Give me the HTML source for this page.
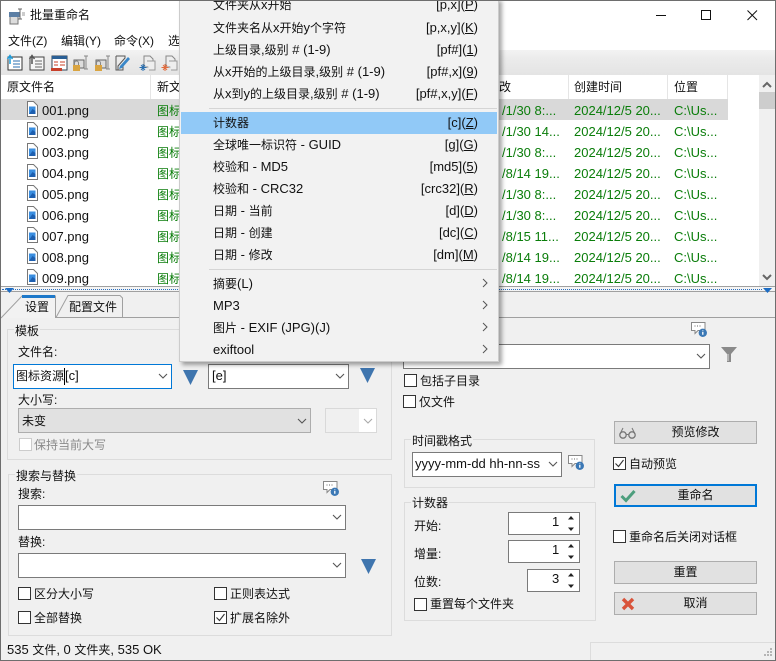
<!DOCTYPE html>
<html lang="zh"><head><meta charset="utf-8"><title>批量重命名</title>
<style>
html,body{margin:0;padding:0}
#w{position:relative;width:776px;height:661px;overflow:hidden;background:#f0f0f0;font:12px/16px "Liberation Sans","Noto Sans CJK SC",sans-serif;color:#111}
#w div,#w svg{position:absolute}
.t{white-space:nowrap}
b{font-weight:normal;font-size:13px}
.r{left:1px;width:758px;height:21px;overflow:hidden}
.r span{position:absolute;top:4px;white-space:nowrap;color:#0a7d0a}
.r span.n{color:#111;left:41px;font-size:13px}
.box{background:#fff;border:1px solid #7a7a7a;box-sizing:border-box}
.btn{background:#e1e1e1;border:1px solid #adadad;box-sizing:border-box;text-align:center;line-height:21px}
.gb{border:1px solid #dcdcdc;box-sizing:border-box}
.cb{width:13px;height:13px;background:#fff;border:1px solid #333;box-sizing:border-box}
.lb{background:#f0f0f0;padding:0 1px}
.mi{left:213px;white-space:nowrap;color:#111}
.ms{right:298px;white-space:nowrap;color:#111}
.hd{top:79px;white-space:nowrap}
</style></head><body>
<div id="w">
<svg width="0" height="0" style="position:absolute"><defs>
<symbol id="f" viewBox="0 0 11 16"><path d="M.5.5h6l4 4v11H.5z" fill="#fff" stroke="#777"/><rect x="2" y="5.500" width="6.500" height="7.500" fill="#3a8ee0"/><path d="M2 13l3.500-5 3 2v3z" fill="#1d5fb0"/></symbol>
<symbol id="c" viewBox="0 0 10 6"><path d="M1 1l4 4 4-4" fill="none" stroke="#555" stroke-width="1.100"/></symbol>
<symbol id="ii" viewBox="0 0 16 16"><path d="M.5 1.500h13.500v8H7l-3 3v-3H.5z" fill="#fff" stroke="#888"/><path d="M3.500 5h1M6 5h1M8.500 5h1" stroke="#666"/><circle cx="11.800" cy="11.800" r="4.200" fill="#3b78b5"/><path d="M11.800 9.500v.8M11.800 11v2.800" stroke="#fff" stroke-width="1.300"/></symbol>
<symbol id="tr" viewBox="0 0 15 15"><path d="M0 0h15L7.500 15z" fill="#3f75ae"/></symbol>
<symbol id="ck" viewBox="0 0 13 13"><path d="M2.500 6.500l3 3 5-6.500" fill="none" stroke="#333" stroke-width="1.100"/></symbol>
<symbol id="sp" viewBox="0 0 8 17"><path d="M4 1l3 3.500H1zM4 16l3-3.500H1z" fill="#222"/></symbol>
</defs></svg>

<!-- title bar -->
<div style="left:0;top:0;width:776px;height:50px;background:#fff"></div>
<svg style="left:9px;top:8px" width="17" height="17" viewBox="0 0 17 17"><rect x="1" y="8" width="8" height="8" fill="#ddd" stroke="#777"/><rect x="0" y="4" width="11" height="5" fill="#5c7fa5"/><path d="M11 1v10M9 1h4M9 11h4" stroke="#666" fill="none"/><rect x="13" y="4" width="3" height="4" fill="#ccc"/></svg>
<div class="t" style="left:30px;top:7px">批量重命名</div>
<svg style="left:650px;top:8px" width="115" height="16" viewBox="0 0 115 16"><path d="M6 7.500h10" stroke="#111"/><rect x="51.500" y="2.500" width="9" height="9" fill="none" stroke="#111"/><path d="M97.500 2.500l9.500 9.500M107 2.500L97.500 12" stroke="#111" fill="none"/></svg>
<div class="t" style="left:8px;top:33px">文件(Z)</div>
<div class="t" style="left:61px;top:33px">编辑(Y)</div>
<div class="t" style="left:114px;top:33px">命令(X)</div>
<div class="t" style="left:168px;top:33px">选</div>

<!-- toolbar -->
<div style="left:0;top:50px;width:776px;height:25px;background:linear-gradient(#f3f3f3,#ececec 30%,#e4e4e4)"></div>
<svg style="left:6px;top:53px" width="172" height="20" viewBox="0 0 172 20">
<g fill="none"><rect x="2" y="4" width="14" height="13" fill="#fff" stroke="#333"/><path d="M7 8h7M7 11h7M7 14h7" stroke="#2a6fb0"/><path d="M4 11V3M1.500 6L4 2.500 6.500 6" stroke="#1f9ad6" stroke-width="1.500"/>
<rect x="24" y="4" width="14" height="13" fill="#f5f5f5" stroke="#444"/><path d="M29 8h7M29 11h7M29 14h7" stroke="#666"/><path d="M26 11V3M23.500 6L26 2.500 28.500 6" stroke="#555" stroke-width="1.500"/>
<rect x="46" y="3" width="15" height="14" fill="#fff" stroke="#345"/><rect x="46" y="3" width="15" height="3" fill="#2a5f95"/><path d="M48 9h4M54 9h5M48 12h4M54 12h5" stroke="#c8402a"/><rect x="45" y="15" width="11" height="3" fill="#c8402a"/>
<rect x="68" y="7" width="10" height="8" fill="#ddd" stroke="#666"/><path d="M80 3v13M78 3h4M78 16h4" stroke="#888"/><rect x="67" y="12" width="7" height="6" fill="#d9a441"/><path d="M68.500 12V10a2 2 0 0 1 4 0v2" stroke="#888"/>
<rect x="90" y="7" width="10" height="8" fill="#ddd" stroke="#666"/><path d="M102 3v13M100 3h4M100 16h4" stroke="#888"/><rect x="89" y="12" width="7" height="6" fill="#d9a441"/><path d="M90.500 12V10a2 2 0 0 1 4 0v2" stroke="#888"/>
<path d="M110 3h9v2l-7 8v4h5v-4M110 3v14h7" stroke="#555"/><path d="M114 13l8-9 2 2-8 9-3 1z" fill="#3a87c8"/>
<path d="M138 3h6l3 3v8h-9z" fill="#eee" stroke="#888"/><path d="M141 8h8v9h-6" fill="#eee" stroke="#999"/><path d="M137 11v7M133.500 14.500h7M135 12l4 5M139 12l-4 5" stroke="#2a6fb0"/>
<path d="M160 3h6l3 3v8h-9z" fill="#eee" stroke="#888"/><path d="M163 8h8v9h-6" fill="#eee" stroke="#999"/><path d="M159 11v7M155.500 14.500h7M157 12l4 5M161 12l-4 5" stroke="#e26a3c"/></g>
</svg>

<!-- list -->
<div style="left:1px;top:75px;width:758px;height:212px;background:#fff"></div>
<div style="left:759px;top:75px;width:16px;height:212px;background:#f0f0f0"></div>
<div style="left:150px;top:75px;width:1px;height:24px;background:#e5e5e5"></div>
<div style="left:568px;top:75px;width:1px;height:24px;background:#e5e5e5"></div>
<div style="left:667px;top:75px;width:1px;height:24px;background:#e5e5e5"></div>
<div style="left:727px;top:75px;width:1px;height:24px;background:#e5e5e5"></div>
<div class="hd" style="left:7px">原文件名</div>
<div class="hd" style="left:157px">新文件名</div>
<div class="hd" style="left:499px">改</div>
<div class="hd" style="left:574px">创建时间</div>
<div class="hd" style="left:674px">位置</div>
<div style="left:759px;top:92px;width:16px;height:17px;background:#cdcdcd"></div>
<svg style="left:760px;top:80px" width="14" height="9" viewBox="0 0 14 9"><path d="M3 7l4-4 4 4" fill="none" stroke="#666" stroke-width="2"/></svg>
<svg style="left:760px;top:273px" width="14" height="9" viewBox="0 0 14 9"><path d="M3 2l4 4 4-4" fill="none" stroke="#666" stroke-width="2"/></svg>

<div class="r" style="top:99px;width:727px;background:#d9d9d9"><span class="n">001.png</span><span style="left:156px">图标资源001.png</span><span style="left:501px;font-size:13px">/1/30 8:...</span><span style="left:573px;font-size:13px">2024/12/5 20...</span><span style="left:673px;font-size:13px">C:\Us...</span></div>
<div class="r" style="top:120px"><span class="n">002.png</span><span style="left:156px">图标资源002.png</span><span style="left:501px;font-size:13px">/1/30 14...</span><span style="left:573px;font-size:13px">2024/12/5 20...</span><span style="left:673px;font-size:13px">C:\Us...</span></div>
<div class="r" style="top:141px"><span class="n">003.png</span><span style="left:156px">图标资源003.png</span><span style="left:501px;font-size:13px">/1/30 8:...</span><span style="left:573px;font-size:13px">2024/12/5 20...</span><span style="left:673px;font-size:13px">C:\Us...</span></div>
<div class="r" style="top:162px"><span class="n">004.png</span><span style="left:156px">图标资源004.png</span><span style="left:501px;font-size:13px">/8/14 19...</span><span style="left:573px;font-size:13px">2024/12/5 20...</span><span style="left:673px;font-size:13px">C:\Us...</span></div>
<div class="r" style="top:183px"><span class="n">005.png</span><span style="left:156px">图标资源005.png</span><span style="left:501px;font-size:13px">/1/30 8:...</span><span style="left:573px;font-size:13px">2024/12/5 20...</span><span style="left:673px;font-size:13px">C:\Us...</span></div>
<div class="r" style="top:204px"><span class="n">006.png</span><span style="left:156px">图标资源006.png</span><span style="left:501px;font-size:13px">/1/30 8:...</span><span style="left:573px;font-size:13px">2024/12/5 20...</span><span style="left:673px;font-size:13px">C:\Us...</span></div>
<div class="r" style="top:225px"><span class="n">007.png</span><span style="left:156px">图标资源007.png</span><span style="left:501px;font-size:13px">/8/15 11...</span><span style="left:573px;font-size:13px">2024/12/5 20...</span><span style="left:673px;font-size:13px">C:\Us...</span></div>
<div class="r" style="top:246px"><span class="n">008.png</span><span style="left:156px">图标资源008.png</span><span style="left:501px;font-size:13px">/8/14 19...</span><span style="left:573px;font-size:13px">2024/12/5 20...</span><span style="left:673px;font-size:13px">C:\Us...</span></div>
<div class="r" style="top:267px;height:20px"><span class="n">009.png</span><span style="left:156px">图标资源009.png</span><span style="left:501px;font-size:13px">/8/14 19...</span><span style="left:573px;font-size:13px">2024/12/5 20...</span><span style="left:673px;font-size:13px">C:\Us...</span></div>
<svg style="left:27px;top:101px" width="11" height="16"><use href="#f"/></svg>
<svg style="left:27px;top:122px" width="11" height="16"><use href="#f"/></svg>
<svg style="left:27px;top:143px" width="11" height="16"><use href="#f"/></svg>
<svg style="left:27px;top:164px" width="11" height="16"><use href="#f"/></svg>
<svg style="left:27px;top:185px" width="11" height="16"><use href="#f"/></svg>
<svg style="left:27px;top:206px" width="11" height="16"><use href="#f"/></svg>
<svg style="left:27px;top:227px" width="11" height="16"><use href="#f"/></svg>
<svg style="left:27px;top:248px" width="11" height="16"><use href="#f"/></svg>
<svg style="left:27px;top:269px" width="11" height="16"><use href="#f"/></svg>

<!-- splitter -->
<div style="left:1px;top:286px;width:774px;height:6px;box-sizing:border-box;border-top:1px solid #a0a0a0;border-bottom:1px solid #a0a0a0;background:#f4f4f4"></div>
<div style="left:2px;top:289px;width:760px;height:0;border-top:1px dotted #2a6fc0"></div>
<svg style="left:5px;top:288px" width="9" height="5"><path d="M0 0h9L4.500 5z" fill="#1c6cc4"/></svg>
<svg style="left:763px;top:288px" width="9" height="5"><path d="M0 0h9L4.500 5z" fill="#1c6cc4"/></svg>

<!-- tabs -->
<div style="left:123px;top:317px;width:652px;height:1px;background:#a0a0a0"></div>
<svg style="left:0;top:292px" width="126" height="27" viewBox="0 0 126 27"><path d="M56 25.500L68 3.500h52l2.500 2.500v19.500z" fill="#f0f0f0" stroke="#a0a0a0"/><path d="M1 26L22 4h33.500v22" fill="#f2f2f2" stroke="#a0a0a0"/><rect x="22" y="3" width="33" height="3" fill="#1f79c9"/></svg>
<div class="t" style="left:25px;top:299px">设置</div>
<div class="t" style="left:69px;top:299px">配置文件</div>

<!-- 模板 -->
<div class="gb" style="left:7px;top:329px;width:385px;height:131px"></div>
<div class="t lb" style="left:14px;top:323px">模板</div>
<div class="t" style="left:18px;top:344px">文件名:</div>
<div class="box" style="left:13px;top:364px;width:159px;height:25px;border-color:#0078d7"></div>
<div class="t" style="left:16px;top:368px">图标资源<b style="margin-left:1px">[c]</b></div>
<div style="left:64px;top:368px;width:1px;height:17px;background:#000"></div>
<svg style="left:158px;top:373px" width="10" height="6"><use href="#c"/></svg>
<svg style="left:183px;top:370px" width="15" height="15"><use href="#tr"/></svg>
<div class="box" style="left:208px;top:364px;width:141px;height:25px"></div>
<div class="t" style="left:212px;top:368px"><b>[e]</b></div>
<svg style="left:335px;top:373px" width="10" height="6"><use href="#c"/></svg>
<svg style="left:360px;top:368px" width="15" height="15"><use href="#tr"/></svg>
<div class="t" style="left:18px;top:392px">大小写:</div>
<div class="btn" style="left:18px;top:408px;width:293px;height:25px"></div>
<div class="t" style="left:22px;top:413px">未变</div>
<svg style="left:297px;top:418px" width="10" height="6"><use href="#c"/></svg>
<div style="left:325px;top:408px;width:52px;height:25px;box-sizing:border-box;border:1px solid #d9d9d9;background:#f0f0f0"></div>
<div style="left:359px;top:409px;width:17px;height:23px;background:#fff"></div>
<svg style="left:363px;top:418px;opacity:.5" width="10" height="6"><use href="#c"/></svg>
<div class="cb" style="left:19px;top:438px;border-color:#ccc"></div>
<div class="t" style="left:34px;top:437px;color:#8a8a8a">保持当前大写</div>

<!-- 搜索与替换 -->
<div class="gb" style="left:8px;top:474px;width:384px;height:162px"></div>
<div class="t lb" style="left:15px;top:468px">搜索与替换</div>
<svg style="left:323px;top:480px" width="16" height="16"><use href="#ii"/></svg>
<div class="t" style="left:18px;top:486px">搜索:</div>
<div class="box" style="left:18px;top:505px;width:328px;height:25px"></div>
<svg style="left:332px;top:514px" width="10" height="6"><use href="#c"/></svg>
<div class="t" style="left:18px;top:534px">替换:</div>
<div class="box" style="left:18px;top:553px;width:328px;height:25px"></div>
<svg style="left:332px;top:562px" width="10" height="6"><use href="#c"/></svg>
<svg style="left:361px;top:559px" width="15" height="15"><use href="#tr"/></svg>
<div class="cb" style="left:18px;top:587px"></div><div class="t" style="left:34px;top:586px">区分大小写</div>
<div class="cb" style="left:214px;top:587px"></div><div class="t" style="left:230px;top:586px">正则表达式</div>
<div class="cb" style="left:18px;top:611px"></div><div class="t" style="left:34px;top:610px">全部替换</div>
<div class="cb" style="left:214px;top:611px"></div><svg style="left:214px;top:611px" width="13" height="13"><use href="#ck"/></svg><div class="t" style="left:230px;top:610px">扩展名除外</div>
<div class="t" style="left:7px;top:642px"><b>535 </b>文件<b>, 0 </b>文件夹<b>, 535 OK</b></div>
<div style="left:591px;top:642px;width:184px;height:1px;background:#dcdcdc"></div>
<div style="left:590px;top:642px;width:1px;height:18px;background:#dcdcdc"></div>
<svg style="left:762px;top:647px" width="12" height="12"><path d="M8 1h2v2H8zM5 4h2v2H5zM8 4h2v2H8zM2 7h2v2H2zM5 7h2v2H5zM8 7h2v2H8z" fill="#b5b5b5"/></svg>

<!-- right side -->
<svg style="left:691px;top:321px" width="16" height="16"><use href="#ii"/></svg>
<div class="box" style="left:403px;top:344px;width:307px;height:25px"></div>
<svg style="left:696px;top:353px" width="10" height="6"><use href="#c"/></svg>
<svg style="left:721px;top:346px" width="16" height="18" viewBox="0 0 16 18"><path d="M0 1h16l-6 7v8H6V8z" fill="#8a8a8a"/><path d="M7 8v7" stroke="#ddd"/></svg>
<div class="cb" style="left:404px;top:374px"></div><div class="t" style="left:420px;top:373px">包括子目录</div>
<div class="cb" style="left:403px;top:395px"></div><div class="t" style="left:419px;top:394px">仅文件</div>
<div class="gb" style="left:404px;top:439px;width:191px;height:49px"></div>
<div class="t lb" style="left:411px;top:433px">时间戳格式</div>
<div class="box" style="left:412px;top:452px;width:150px;height:25px"></div>
<div class="t" style="left:415px;top:456px"><b>yyyy-mm-dd hh-nn-ss</b></div>
<svg style="left:548px;top:461px" width="10" height="6"><use href="#c"/></svg>
<svg style="left:568px;top:454px" width="16" height="16"><use href="#ii"/></svg>
<div class="gb" style="left:404px;top:502px;width:192px;height:119px"></div>
<div class="t lb" style="left:411px;top:495px">计数器</div>
<div class="t" style="left:414px;top:518px">开始:</div>
<div class="box" style="left:508px;top:512px;width:72px;height:23px"></div>
<div class="t" style="left:552px;top:514px"><b>1</b></div>
<svg style="left:567px;top:515px" width="8" height="17"><use href="#sp"/></svg>
<div class="t" style="left:414px;top:546px">增量:</div>
<div class="box" style="left:508px;top:540px;width:72px;height:23px"></div>
<div class="t" style="left:552px;top:542px"><b>1</b></div>
<svg style="left:567px;top:543px" width="8" height="17"><use href="#sp"/></svg>
<div class="t" style="left:414px;top:574px">位数:</div>
<div class="box" style="left:527px;top:569px;width:53px;height:23px"></div>
<div class="t" style="left:552px;top:571px"><b>3</b></div>
<svg style="left:567px;top:572px" width="8" height="17"><use href="#sp"/></svg>
<div class="cb" style="left:414px;top:598px"></div><div class="t" style="left:430px;top:596px">重置每个文件夹</div>

<div class="btn" style="left:614px;top:421px;width:143px;height:23px">&nbsp;&nbsp;&nbsp;&nbsp;&nbsp;&nbsp;预览修改</div>
<svg style="left:619px;top:426px" width="17" height="14" viewBox="0 0 17 14"><circle cx="4" cy="9" r="3.200" fill="none" stroke="#777" stroke-width="1.300"/><circle cx="13" cy="9" r="3.200" fill="none" stroke="#777" stroke-width="1.300"/><path d="M7 8.500h3M1 8l3-6M16 8l-3-6" fill="none" stroke="#777"/></svg>
<div class="cb" style="left:613px;top:457px"></div><svg style="left:613px;top:457px" width="13" height="13"><use href="#ck"/></svg><div class="t" style="left:629px;top:456px">自动预览</div>
<div class="btn" style="left:614px;top:484px;width:143px;height:23px;border:2px solid #0078d7;line-height:19px">&nbsp;&nbsp;&nbsp;&nbsp;&nbsp;&nbsp;重命名</div>
<svg style="left:620px;top:489px" width="16" height="14" viewBox="0 0 16 14"><path d="M1.500 7l4.500 4.500L14.500 2" fill="none" stroke="#4d9e7d" stroke-width="3"/></svg>
<div class="cb" style="left:613px;top:530px"></div><div class="t" style="left:629px;top:529px">重命名后关闭对话框</div>
<div class="btn" style="left:614px;top:561px;width:143px;height:23px;padding-right:0">重置</div>
<div class="btn" style="left:614px;top:592px;width:143px;height:23px">&nbsp;&nbsp;&nbsp;&nbsp;&nbsp;&nbsp;取消</div>
<svg style="left:621px;top:597px" width="14" height="14" viewBox="0 0 14 14"><path d="M2 2l10 10M12 2L2 12" stroke="#d9533a" stroke-width="3.400"/></svg>

<!-- popup menu -->
<div style="left:179px;top:-2px;width:320px;height:364px;background:#f2f2f2;border-left:1px solid #ccc;border-right:1px solid #ccc;border-bottom:1px solid #ccc;box-sizing:border-box;box-shadow:3px 3px 4px rgba(0,0,0,.35)"></div>
<div style="left:209px;top:108px;width:288px;height:1px;background:#d5d5d5"></div>
<div style="left:209px;top:269px;width:288px;height:1px;background:#d5d5d5"></div>
<div style="left:181px;top:112px;width:316px;height:22px;background:#91c9f7"></div>
<div class="t mi" style="top:-3px">文件夹从<b>x</b>开始</div><div class="t ms" style="top:-3px"><b>[p,x](<u>P</u>)</b></div>
<div class="t mi" style="top:20px">文件夹名从<b>x</b>开始<b>y</b>个字符</div><div class="t ms" style="top:20px"><b>[p,x,y](<u>K</u>)</b></div>
<div class="t mi" style="top:42px">上级目录<b>,</b>级别<b> # (1-9)</b></div><div class="t ms" style="top:42px"><b>[pf#](<u>1</u>)</b></div>
<div class="t mi" style="top:64px">从<b>x</b>开始的上级目录<b>,</b>级别<b> # (1-9)</b></div><div class="t ms" style="top:64px"><b>[pf#,x](<u>9</u>)</b></div>
<div class="t mi" style="top:86px">从<b>x</b>到<b>y</b>的上级目录<b>,</b>级别<b> # (1-9)</b></div><div class="t ms" style="top:86px"><b>[pf#,x,y](<u>F</u>)</b></div>
<div class="t mi" style="top:115px">计数器</div><div class="t ms" style="top:115px"><b>[c](<u>Z</u>)</b></div>
<div class="t mi" style="top:137px">全球唯一标识符<b> - GUID</b></div><div class="t ms" style="top:137px"><b>[g](<u>G</u>)</b></div>
<div class="t mi" style="top:159px">校验和<b> - MD5</b></div><div class="t ms" style="top:159px"><b>[md5](<u>5</u>)</b></div>
<div class="t mi" style="top:181px">校验和<b> - CRC32</b></div><div class="t ms" style="top:181px"><b>[crc32](<u>R</u>)</b></div>
<div class="t mi" style="top:203px">日期<b> - </b>当前</div><div class="t ms" style="top:203px"><b>[d](<u>D</u>)</b></div>
<div class="t mi" style="top:225px">日期<b> - </b>创建</div><div class="t ms" style="top:225px"><b>[dc](<u>C</u>)</b></div>
<div class="t mi" style="top:247px">日期<b> - </b>修改</div><div class="t ms" style="top:247px"><b>[dm](<u>M</u>)</b></div>
<div class="t mi" style="top:276px">摘要<b>(L)</b></div>
<div class="t mi" style="top:298px"><b>MP3</b></div>
<div class="t mi" style="top:320px">图片<b> - EXIF (JPG)(J)</b></div>
<div class="t mi" style="top:342px"><b>exiftool</b></div>
<svg style="left:482px;top:278px" width="6" height="80" viewBox="0 0 6 80"><path d="M1 1l4 4-4 4M1 23l4 4-4 4M1 45l4 4-4 4M1 67l4 4-4 4" fill="none" stroke="#555"/></svg>

<!-- window border -->
<div style="left:0;top:0;width:776px;height:661px;box-sizing:border-box;border:1px solid #6e6e6e"></div>
</div>
</body></html>
